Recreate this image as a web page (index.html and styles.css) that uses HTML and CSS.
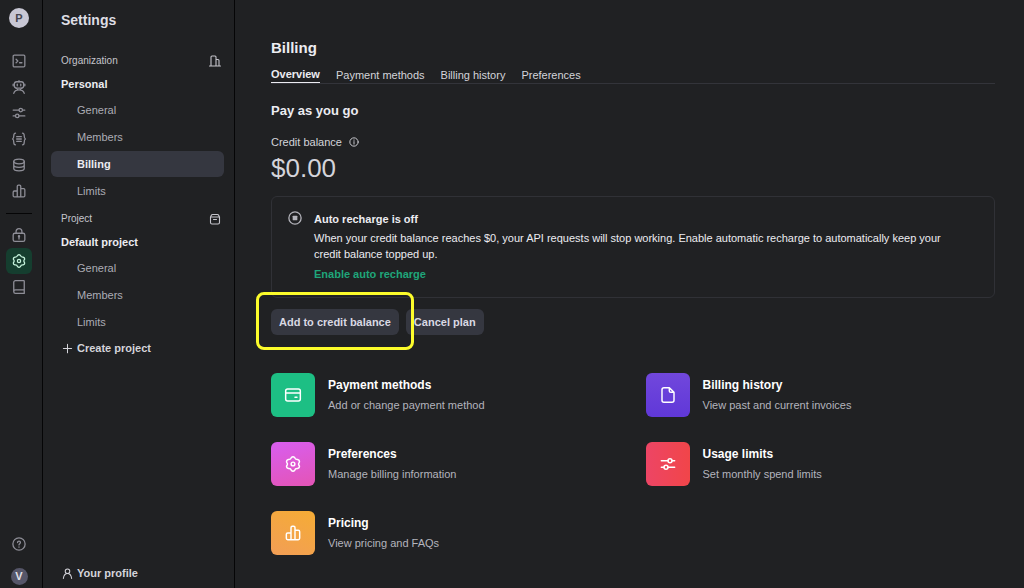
FILE: index.html
```html
<!DOCTYPE html>
<html lang="en">
<head>
<meta charset="utf-8">
<title>Billing</title>
<link rel="stylesheet" href="styles.css">
</head>
<body>
<svg class="defs" aria-hidden="true">
  <symbol id="gear" viewBox="0 0 24 24"><path d="M9.500 2.400Q12 0 14.500 2.400 15.300 5.600 19 5.200 22.300 6.200 21.500 9.300 19.200 12 21.500 14.700 22.300 17.800 19 18.800 15.300 18.400 14.500 21.600 12 24 9.500 21.600 8.700 18.400 5 18.800 1.700 17.800 2.500 14.700 4.800 12 2.500 9.300 1.700 6.200 5 5.200 8.700 5.600 9.500 2.400z"/><circle cx="12" cy="12" r="2.800"/></symbol>
  <symbol id="bars" viewBox="0 0 24 24"><path d="M9 22V4a2 2 0 0 1 2-2h2a2 2 0 0 1 2 2v18M9 12H4a2 2 0 0 0-2 2v6a2 2 0 0 0 2 2h16a2 2 0 0 0 2-2V10a2 2 0 0 0-2-2h-5"/></symbol>
  <symbol id="sliders" viewBox="0 0 24 24"><path d="M2 7h10M18 7h4M2 17h4M12 17h10"/><circle cx="15" cy="7" r="3"/><circle cx="9" cy="17" r="3"/></symbol>
</svg>
<div class="app">
  <nav class="rail" aria-label="Main">
    <button class="avatar" aria-label="Organization P">P</button>
    <div class="rail-group">
      <a class="rail-link" href="#" aria-label="Playground"><svg class="icon" viewBox="0 0 24 24"><rect x="2" y="2" width="20" height="20" rx="2"/><path d="m7 9 3 3-3 3M13 15h4"/></svg></a>
      <a class="rail-link" href="#" aria-label="Assistants"><svg class="icon" viewBox="0 0 24 24"><rect x="4" y="3" width="16" height="11" rx="4"/><path d="M12 1v2M2 7v3M22 7v3M9 7v3M15 7v3M3 23c1-4 4-6 9-6s8 2 9 6M7 14l3 3M17 14l-3 3"/></svg></a>
      <a class="rail-link" href="#" aria-label="Fine-tuning"><svg class="icon"><use href="#sliders"/></svg></a>
      <a class="rail-link" href="#" aria-label="Batches"><svg class="icon" viewBox="0 0 24 24"><path d="M6 2C3 2 3 4 3 7s0 4-2 5c2 1 2 2 2 5s0 5 3 5M18 2c3 0 3 2 3 5s0 4 2 5c-2 1-2 2-2 5s0 5-3 5M8 8h8M8 12h8M8 16h8"/></svg></a>
      <a class="rail-link" href="#" aria-label="Storage"><svg class="icon" viewBox="0 0 24 24"><ellipse cx="12" cy="6" rx="9" ry="4"/><path d="M3 6v12c0 2 4 4 9 4s9-2 9-4V6M3 12c0 2 4 4 9 4s9-2 9-4"/></svg></a>
      <a class="rail-link" href="#" aria-label="Usage"><svg class="icon"><use href="#bars"/></svg></a>
    </div>
    <div class="rail-group rail-second">
      <a class="rail-link" href="#" aria-label="API keys"><svg class="icon" viewBox="0 0 24 24"><rect x="2" y="9" width="20" height="14" rx="3"/><path d="M7 9V6a5 5 0 0 1 10 0v3M12 14v5"/><circle cx="12" cy="14" r="1"/></svg></a>
      <a class="rail-link rail-active" href="#" aria-label="Settings" aria-current="page"><svg class="icon icon-gear"><use href="#gear"/></svg></a>
      <a class="rail-link" href="#" aria-label="Documentation"><svg class="icon" viewBox="0 0 24 24"><path d="M3 20V4a3 3 0 0 1 3-3h14a1 1 0 0 1 1 1v21H6a3 3 0 0 1 0-6h15"/></svg></a>
    </div>
    <div class="rail-foot">
      <a class="rail-help" href="#" aria-label="Help"><svg class="icon" viewBox="0 0 24 24"><circle cx="12" cy="12" r="10.500"/><path d="M9.500 9.500c0-3 5-3 5 0 0 2-2.500 2-2.500 4M12 17v.5"/></svg></a>
      <button class="avatar avatar-user" aria-label="User V">V</button>
    </div>
  </nav>
  <aside class="side">
    <h1 class="side-title">Settings</h1>
    <section class="side-section">
      <div class="side-label">Organization<svg class="icon" viewBox="0 0 24 24"><path d="M1 22h22M4 22V4q0-2 2-2h6q2 0 2 2v18M14 9h4q2 0 2 2v11"/></svg></div>
      <h2 class="side-name">Personal</h2>
      <a class="side-link" href="#">General</a>
      <a class="side-link" href="#">Members</a>
      <a class="side-link side-current" href="#" aria-current="page">Billing</a>
      <a class="side-link" href="#">Limits</a>
    </section>
    <section class="side-section">
      <div class="side-label">Project<svg class="icon" viewBox="0 0 24 24"><path d="M3 8h18v11a3 3 0 0 1-3 3H6a3 3 0 0 1-3-3V8l2-4q1-1 2-1h10q1 0 2 1l2 4M9 13h6"/></svg></div>
      <h2 class="side-name">Default project</h2>
      <a class="side-link" href="#">General</a>
      <a class="side-link" href="#">Members</a>
      <a class="side-link" href="#">Limits</a>
      <button class="side-action"><svg class="icon icon-small" viewBox="0 0 24 24"><path d="M12 3v18M3 12h18"/></svg>Create project</button>
    </section>
    <a class="side-action side-profile" href="#"><svg class="icon icon-small" viewBox="0 0 24 24"><circle cx="12" cy="7" r="5"/><path d="M3 23c1-8 5-11 9-11s8 3 9 11"/></svg>Your profile</a>
  </aside>
  <main class="main">
    <h1 class="title">Billing</h1>
    <nav class="tabs" aria-label="Billing sections">
      <a class="tab tab-current" href="#" aria-current="page">Overview</a>
      <a class="tab" href="#">Payment methods</a>
      <a class="tab" href="#">Billing history</a>
      <a class="tab" href="#">Preferences</a>
    </nav>
    <h2 class="plan">Pay as you go</h2>
    <div class="balance-label">Credit balance<svg class="icon icon-info" viewBox="0 0 24 24"><circle cx="12" cy="12" r="10"/><path d="M12 11v6M12 7v1"/></svg></div>
    <div class="balance">$0.00</div>
    <section class="notice">
      <svg class="icon icon-notice" viewBox="0 0 24 24"><circle cx="12" cy="12" r="10.500"/><rect class="solid" x="8" y="8" width="8" height="8" rx="1"/></svg>
      <div class="notice-body">
        <h3 class="notice-title">Auto recharge is off</h3>
        <p class="notice-text">When your credit balance reaches $0, your API requests will stop working. Enable automatic recharge to automatically keep your credit balance topped up.</p>
        <a class="notice-link" href="#">Enable auto recharge</a>
      </div>
    </section>
    <div class="actions">
      <div class="marked"><button class="button">Add to credit balance</button></div>
      <button class="button">Cancel plan</button>
    </div>
    <div class="cards">
      <a class="card" href="#"><span class="tile tile-green"><svg class="icon" viewBox="0 0 24 24"><rect x="1" y="3" width="22" height="18" rx="3"/><path d="M1 9h22M15 15.500h3"/></svg></span><span class="card-text"><strong class="card-title">Payment methods</strong><span class="card-desc">Add or change payment method</span></span></a>
      <a class="card" href="#"><span class="tile tile-purple"><svg class="icon" viewBox="0 0 24 24"><path d="M14 1H6a3 3 0 0 0-3 3v16a3 3 0 0 0 3 3h12a3 3 0 0 0 3-3V8zM14 1v5q0 2 2 2h5"/></svg></span><span class="card-text"><strong class="card-title">Billing history</strong><span class="card-desc">View past and current invoices</span></span></a>
      <a class="card" href="#"><span class="tile tile-pink"><svg class="icon"><use href="#gear"/></svg></span><span class="card-text"><strong class="card-title">Preferences</strong><span class="card-desc">Manage billing information</span></span></a>
      <a class="card" href="#"><span class="tile tile-red"><svg class="icon"><use href="#sliders"/></svg></span><span class="card-text"><strong class="card-title">Usage limits</strong><span class="card-desc">Set monthly spend limits</span></span></a>
      <a class="card" href="#"><span class="tile tile-orange"><svg class="icon"><use href="#bars"/></svg></span><span class="card-text"><strong class="card-title">Pricing</strong><span class="card-desc">View pricing and FAQs</span></span></a>
    </div>
  </main>
</div>
</body>
</html>
```
FILE: styles.css
```css
* { box-sizing: border-box; }
body {
  margin: 0;
  background: #202123;
  color: #d4d4da;
  font: 11px/16px "Liberation Sans", Arial, sans-serif;
}
h1, h2, h3, p { margin: 0; }
a { color: inherit; text-decoration: none; }
button { border: 0; background: none; color: inherit; font: inherit; cursor: pointer; }
.defs { position: absolute; width: 0; height: 0; }
.icon {
  flex: none;
  width: 14px;
  height: 14px;
  fill: none;
  stroke: currentColor;
  stroke-width: 2.2;
  stroke-linecap: round;
  stroke-linejoin: round;
  overflow: visible;
}
.icon-small { width: 11px; height: 11px; }
.solid { fill: currentColor; stroke: none; }

.app { display: flex; min-height: 100vh; }

.rail {
  flex: none;
  display: flex;
  flex-direction: column;
  align-items: center;
  width: 43px;
  padding: 8px 4px 3px 0;
  border-right: 1px solid #050506;
  color: #8e8e97;
}
.avatar {
  width: 20px;
  height: 20px;
  padding: 0;
  border-radius: 50%;
  background: #c8c7d4;
  color: #45454f;
  font-weight: 700;
  line-height: 20px;
}
.avatar-user { width: 17px; height: 17px; background: #565669; color: #e2e2ea; line-height: 17px; }
.rail-group { display: flex; flex-direction: column; padding: 20px 0 9px; }
.rail-second { padding-top: 8px; border-top: 1px solid #050506; }
.rail-link {
  display: flex;
  align-items: center;
  justify-content: center;
  width: 26px;
  height: 26px;
  border-radius: 6px;
}
.rail-active { background: #153e2f; color: #c5f3dc; }
.rail-foot { display: flex; flex-direction: column; align-items: center; gap: 17px; margin-top: auto; }
.rail-help { display: flex; }

.side {
  flex: none;
  display: flex;
  flex-direction: column;
  width: 192px;
  padding: 10px 10px 7px 8px;
  border-right: 1px solid #050506;
}
.side-title { padding-left: 10px; color: #dedee4; font-size: 14px; line-height: 20px; }
.side-section { margin-top: 3px; }
.side-title + .side-section { margin-top: 19px; }
.side-label {
  display: flex;
  align-items: center;
  justify-content: space-between;
  height: 22px;
  padding: 2px 3px 0 10px;
  color: #c5c5cc;
  font-size: 10px;
}
.side-label .icon { width: 12px; height: 12px; }
.side-name { padding: 0 10px; color: #ececf1; font-size: 11px; line-height: 26px; }
.side-link { display: block; padding-left: 26px; border-radius: 6px; color: #acacb5; line-height: 26px; }
.side-link + .side-link { margin-top: 1px; }
.side-current { background: #353740; color: #ececf1; font-weight: 700; }
.side-action {
  display: flex;
  align-items: center;
  gap: 4px;
  padding: 0 0 0 11px;
  color: #d4d4da;
  font-weight: 700;
  line-height: 26px;
}
.side-profile { margin-top: auto; line-height: 16px; }

.main { flex: 1; min-width: 0; padding: 38px 29px 24px 36px; }
.title { color: #ececf1; font-size: 15px; line-height: 20px; }
.tabs { display: flex; gap: 16px; margin-top: 9px; border-bottom: 1px solid #33343a; }
.tab-current { border-bottom: 1px solid #ececf1; color: #ececf1; font-weight: 700; line-height: 15px; }
.plan { margin-top: 17px; color: #ececf1; font-size: 13px; line-height: 20px; }
.balance-label { display: flex; align-items: center; gap: 7px; margin-top: 13px; }
.icon-info { width: 10px; height: 10px; }
.balance { font-size: 26px; line-height: 32px; margin-top: 2px; }
.notice {
  display: flex;
  gap: 12px;
  margin-top: 12px;
  padding: 14px 36px 15px 16px;
  border: 1px solid #303136;
  border-radius: 6px;
  color: #ececf1;
}
.icon-notice { color: #b4b4bb; }
.notice-title { font-size: 11px; line-height: 16px; }
.notice-text { margin: 3px 0 4px; }
.notice-link { color: #1fa67a; font-weight: 700; }
.actions { display: flex; gap: 7px; margin-top: 11px; }
.button { padding: 0 8px; border-radius: 6px; background: #353740; color: #d9d9e3; font-weight: 700; line-height: 26px; }
.marked { position: relative; }
.marked::after {
  content: "";
  position: absolute;
  inset: -17px -15px -15px -15px;
  border: 3px solid #fcfc2b;
  border-radius: 8px;
  pointer-events: none;
}
.cards { display: grid; grid-template-columns: 1fr 1fr; gap: 25px; margin-top: 38px; }
.card { display: flex; align-items: center; gap: 13px; }
.tile {
  display: flex;
  align-items: center;
  justify-content: center;
  width: 44px;
  height: 44px;
  border-radius: 6px;
  color: #fff;
}
.tile .icon { width: 16px; height: 16px; }
.tile-green { background: #1dbf84; }
.tile-purple { background: linear-gradient(#7147dc, #6038d8); }
.tile-pink { background: linear-gradient(165deg, #d85ef0, #e454b5); }
.tile-red { background: linear-gradient(90deg, #ed4565, #f14549); }
.tile-orange { background: linear-gradient(25deg, #f29e56, #f5ac35); }
.card-text { display: flex; flex-direction: column; gap: 4px; }
.card-title { color: #fff; font-size: 12px; }
.card-desc { color: #b4b4bd; }
```
